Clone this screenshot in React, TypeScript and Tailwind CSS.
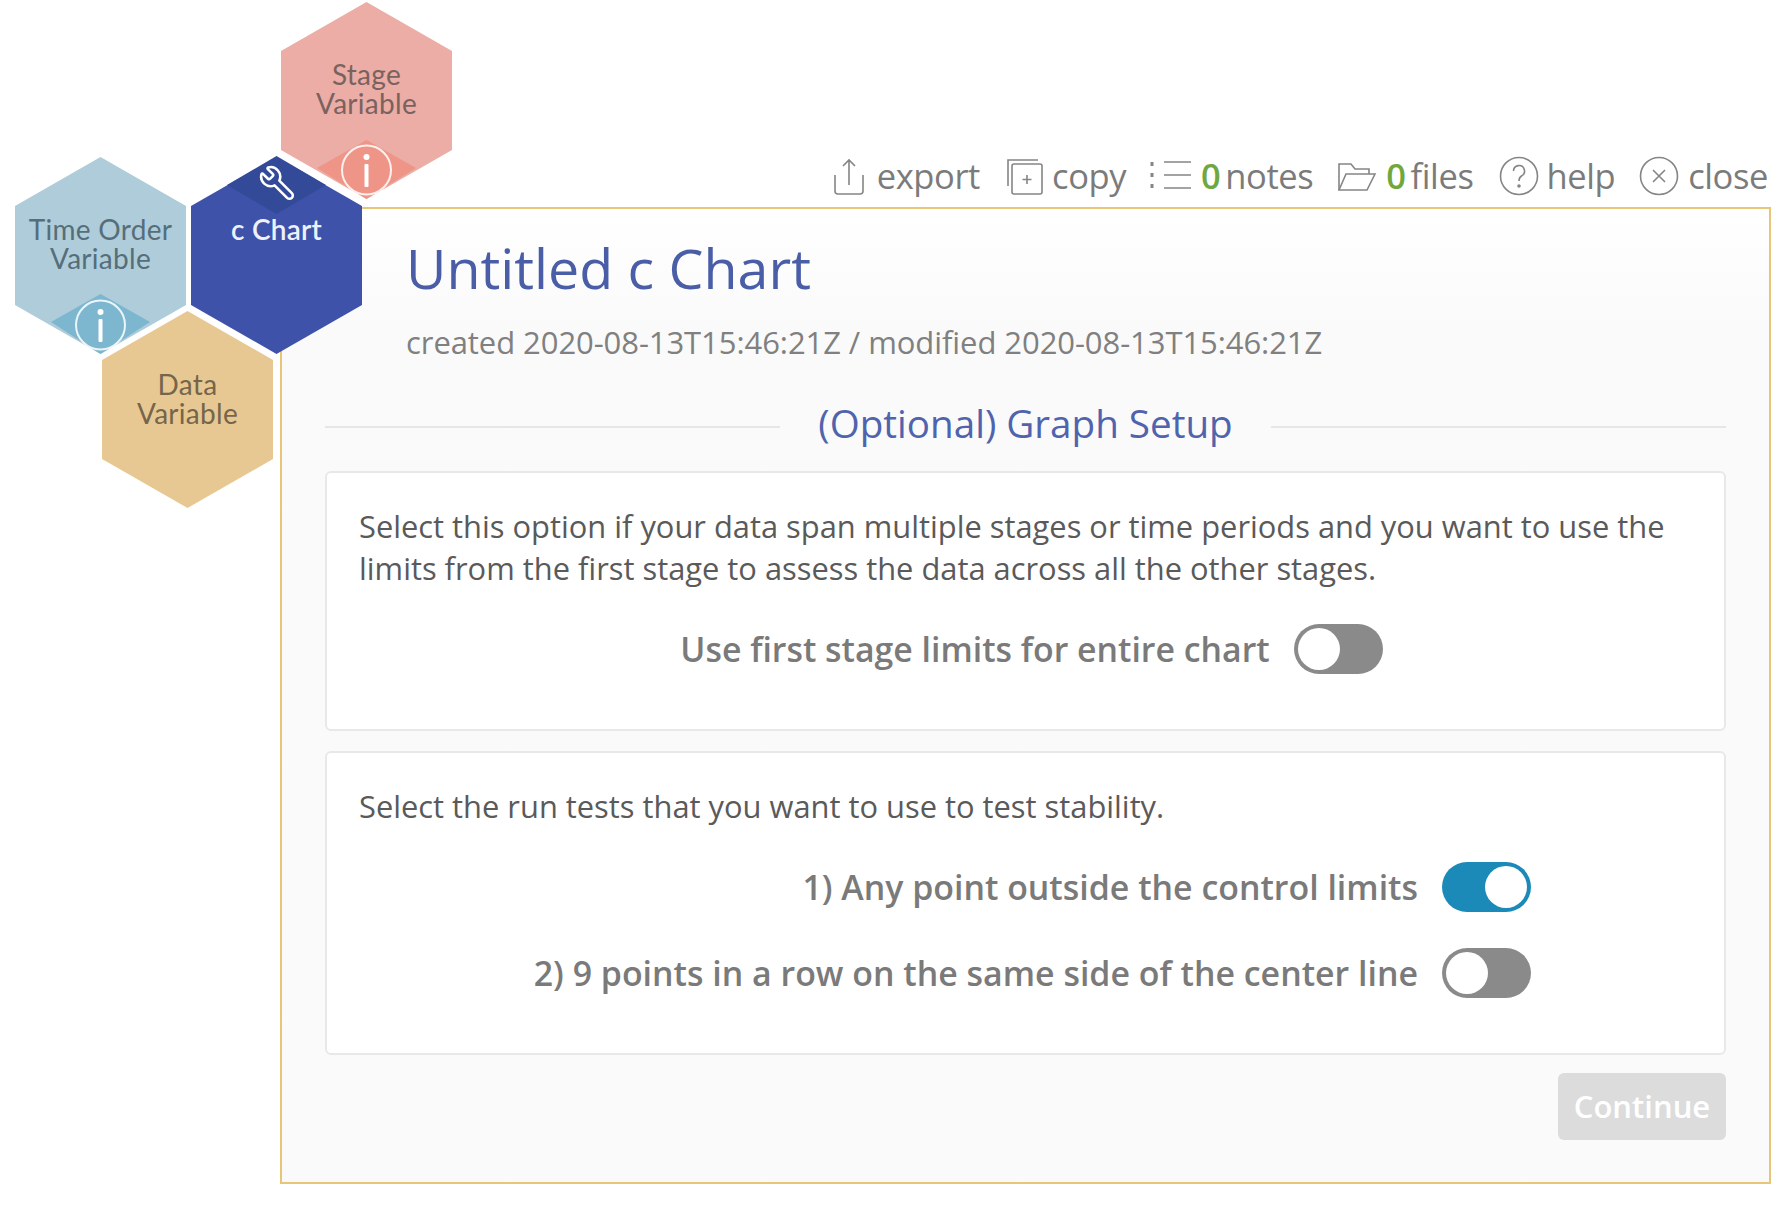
import { Wrench } from "lucide-react";

const HEX = "85.5,1 171,50 171,149 85.5,198 0,149 0,50";

function InfoBadge({ cx, cy }: { cx: number; cy: number }) {
  return (
    <g>
      <circle cx={cx} cy={cy} r="24.5" fill="none" stroke="#ffffff" strokeOpacity="0.85" strokeWidth="2" />
      <circle cx={cx} cy={cy - 13} r="3" fill="#ffffff" />
      <rect x={cx - 2} y={cy - 6} width="4" height="23" rx="1" fill="#ffffff" />
    </g>
  );
}

function Hex({
  className,
  fill,
  diamond,
  diamondPoints,
  badge,
  textClass,
  lines,
}: {
  className: string;
  fill: string;
  diamond?: string;
  diamondPoints?: string;
  badge?: [number, number];
  textClass: string;
  lines: string[];
}) {
  return (
    <div className={`absolute w-[171px] h-[199px] ${className}`}>
      <svg width="171" height="199" viewBox="0 0 171 199" className="absolute inset-0">
        <polygon points={HEX} fill={fill} />
        {diamond && diamondPoints && <polygon points={diamondPoints} fill={diamond} />}
        {badge && <InfoBadge cx={badge[0]} cy={badge[1]} />}
      </svg>
      <div className={`absolute inset-x-0 text-center ${textClass}`}>
        {lines.map((l) => (
          <div key={l}>{l}</div>
        ))}
      </div>
    </div>
  );
}

function Toggle({ on }: { on?: boolean }) {
  return (
    <div
      className={`shrink-0 w-[89px] h-[50px] rounded-full p-[4px] flex ${
        on ? "bg-[#1b8ab8] justify-end" : "bg-[#8a8a8a] justify-start"
      }`}
    >
      <div className="w-[42px] h-[42px] rounded-full bg-white" />
    </div>
  );
}

const Icon = ({ w, children }: { w: number; children: React.ReactNode }) => (
  <svg
    width={w}
    height="42"
    viewBox={`0 0 ${w} 42`}
    fill="none"
    stroke="#858585"
    strokeWidth="1.6"
    className="shrink-0"
  >
    {children}
  </svg>
);

function Tool({ icon, count, label, className }: { icon: React.ReactNode; count?: string; label: string; className: string }) {
  return (
    <div className={`flex items-center ${className}`}>
      {icon}
      {count && <span className="text-[#6fa83e] font-semibold tracking-[-0.5px]">{count}</span>}
      <span className={count ? "ml-[-5px]" : "ml-[-2px]"}>{label}</span>
    </div>
  );
}

export default function App() {
  return (
    <div className="relative w-[1791px] h-[1208px] bg-white overflow-hidden font-['Open_Sans',sans-serif]">
      {/* variable map */}
      <Hex
        className="left-[281px] top-[1px] z-10"
        fill="#ebada5"
        diamond="#ef9588"
        diamondPoints="85.5,139 135,167 85.5,198 36,167"
        badge={[85.5, 169]}
        textClass="top-[59px] text-[28px] leading-[28.5px] tracking-[0.3px] text-[#7a625f] font-['Lato',sans-serif]"
        lines={["Stage", "Variable"]}
      />
      <Hex
        className="left-[15px] top-[156px] z-10"
        fill="#aeccd9"
        diamond="#7cb7cf"
        diamondPoints="85.5,138 135,166 85.5,198 36,166"
        badge={[85.5, 169]}
        textClass="top-[59px] text-[28px] leading-[29px] tracking-[0.3px] text-[#566e7a] font-['Lato',sans-serif]"
        lines={["Time Order", "Variable"]}
      />
      <Hex
        className="left-[191px] top-[156px] z-20"
        fill="#3d52a8"
        diamond="#334a98"
        diamondPoints="85.5,0 135,29 85.5,58 36,29"
        textClass="top-[59px] text-[28px] leading-[29px] tracking-[0.2px] text-[#eef1fb] font-['Lato',sans-serif] font-semibold"
        lines={["c Chart"]}
      />
      <Hex
        className="left-[102px] top-[310px] z-10"
        fill="#e8c892"
        textClass="top-[60px] text-[28px] leading-[28.5px] tracking-[0.3px] text-[#75654a] font-['Lato',sans-serif]"
        lines={["Data", "Variable"]}
      />
      <div className="absolute left-[258px] top-[164px] z-30 -scale-x-100 text-white">
        <Wrench size={38} strokeWidth={1.6} />
      </div>

      {/* toolbar */}
      <div className="h-[207px] pt-[155px] pr-[23px] flex justify-end items-start text-[34.500px] leading-[42px] text-[#7b7b7b] tracking-[-0.4px]">
        <Tool
          className="gap-[14px] mr-[25px]"
          label="export"
          icon={
            <Icon w={32}>
              <path d="M2 20v16a3 3 0 0 0 3 3h22a3 3 0 0 0 3-3V20M16 30V5M10 11l6-6 6 6" />
            </Icon>
          }
        />
        <Tool
          className="gap-[11px] mr-[24px]"
          label="copy"
          icon={
            <Icon w={38}>
              <path d="M3 31V5h30" />
              <rect x="7" y="9" width="30" height="30" rx="2" />
              <path d="M22 20v9M17.5 24.5h9" />
            </Icon>
          }
        />
        <Tool
          className="gap-[10px] mr-[24px]"
          count="0"
          label="notes"
          icon={
            <Icon w={41}>
              <path d="M14 7h27M14 20h27M14 33h27" />
              <path d="M2 7v4M2 18v4M2 29v4" strokeWidth="3" />
            </Icon>
          }
        />
        <Tool
          className="gap-[10px] mr-[26px]"
          count="0"
          label="files"
          icon={
            <Icon w={39}>
              <path d="M2 35V9h12l4 5h14v5" />
              <path d="M2 35l7-16h29l-8 16z" />
            </Icon>
          }
        />
        <Tool
          className="gap-[9px] mr-[24px]"
          label="help"
          icon={
            <Icon w={40}>
              <circle cx="20" cy="21" r="18.5" />
              <path d="M14.5 16a5.500 5.500 0 1 1 8 5c-2 1.200-2.500 2.500-2.500 5" />
              <circle cx="20" cy="31" r="1" fill="#858585" />
            </Icon>
          }
        />
        <Tool
          className="gap-[11px]"
          label="close"
          icon={
            <Icon w={40}>
              <circle cx="20" cy="21" r="18.5" />
              <path d="M14 15l12 12M26 15l-12 12" />
            </Icon>
          }
        />
      </div>

      {/* panel */}
      <div className="ml-[280px] w-[1491px] h-[977px] border-2 border-[#e8c678] bg-gradient-to-b from-white to-[#fafafa] to-[12%] px-[43px]">
        <div className="pl-[81px] pt-[24px]">
          <h1 className="text-[55.500px] leading-[70px] text-[#4a5ea8] font-normal">Untitled c Chart</h1>
          <p className="mt-[19px] text-[31px] leading-[40px] text-[#808080] tracking-[-0.07px]">
            created 2020-08-13T15:46:21Z / modified 2020-08-13T15:46:21Z
          </p>
        </div>

        <div className="mt-[37px] flex items-center gap-[38px]">
          <div className="flex-1 h-[2px] bg-[#e6e6e6] translate-y-[4px]" />
          <h2 className="text-[38.600px] leading-[48px] text-[#5063ad] font-normal">(Optional) Graph Setup</h2>
          <div className="flex-1 h-[2px] bg-[#e6e6e6] translate-y-[4px]" />
        </div>

        <div className="mt-[24px] h-[260px] rounded-[6px] border-2 border-[#e8e8e8] bg-white px-[32px] pt-[32px]">
          <p className="text-[30.850px] leading-[42px] text-[#5a5a5a]">
            Select this option if your data span multiple stages or time periods and you want to use the limits from
            the first stage to assess the data across all the other stages.
          </p>
          <div className="mt-[35px] flex items-center justify-center gap-[24px] pl-[12px]">
            <span className="text-[33.850px] leading-[50px] font-semibold text-[#7a7a7a]">
              Use first stage limits for entire chart
            </span>
            <Toggle />
          </div>
        </div>

        <div className="mt-[20px] h-[304px] rounded-[6px] border-2 border-[#e8e8e8] bg-white px-[32px] pt-[32px]">
          <p className="text-[30.850px] leading-[42px] text-[#5a5a5a]">
            Select the run tests that you want to use to test stability.
          </p>
          <div className="mt-[35px] flex flex-col gap-[36px] items-end pr-[161px]">
            <div className="flex items-center gap-[24px]">
              <span className="text-[33.900px] leading-[50px] font-semibold text-[#7a7a7a]">
                1) Any point outside the control limits
              </span>
              <Toggle on />
            </div>
            <div className="flex items-center gap-[24px]">
              <span className="text-[33.900px] leading-[50px] font-semibold text-[#7a7a7a]">
                2) 9 points in a row on the same side of the center line
              </span>
              <Toggle />
            </div>
          </div>
        </div>

        <div className="mt-[18px] flex justify-end">
          <button className="w-[168px] h-[67px] rounded-[6px] bg-[#dcdcdc] text-white text-[31px] font-semibold">
            Continue
          </button>
        </div>
      </div>
    </div>
  );
}
